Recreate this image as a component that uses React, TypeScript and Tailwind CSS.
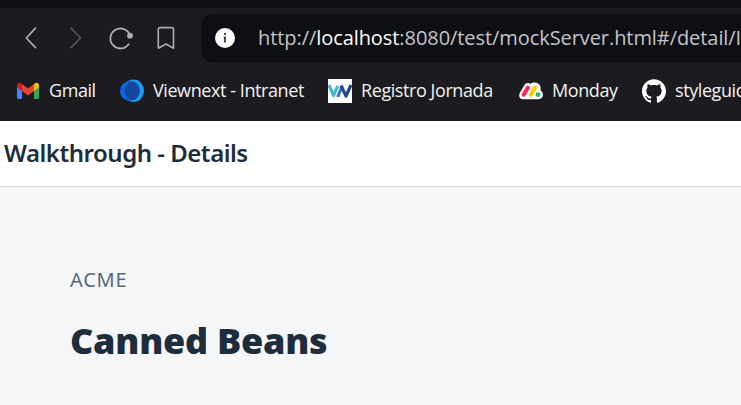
import { SiGithub } from "react-icons/si";

const BackIcon = () => (
  <svg className="block h-6 w-6" viewBox="0 0 24 24" fill="none" stroke="#aeaeb2" strokeWidth="1.7" strokeLinecap="round" strokeLinejoin="round">
    <path d="M16.5 2.200 7.300 12 16.500 21.700" />
  </svg>
);

const ForwardIcon = () => (
  <svg className="block h-6 w-6" viewBox="0 0 24 24" fill="none" stroke="#55555a" strokeWidth="1.7" strokeLinecap="round" strokeLinejoin="round">
    <path d="M7 2.200 16.500 12 7 21.700" />
  </svg>
);

const ReloadIcon = () => (
  <svg className="block h-6 w-6" viewBox="0 0 24 24" fill="none">
    <path d="M19.600 18.200A10 10 0 1 1 20.600 8.600" stroke="#aeaeb2" strokeWidth="1.8" strokeLinecap="round" />
    <circle cx="21" cy="9.700" r="2.900" fill="#aeaeb2" />
  </svg>
);

const BookmarkIcon = () => (
  <svg className="block h-6 w-6" viewBox="0 0 24 24" fill="none" stroke="#aeaeb2" strokeWidth="1.6" strokeLinejoin="round">
    <path d="M4.300 22.200V3.400Q4.300 1.600 6.100 1.600H17.700Q19.500 1.600 19.500 3.400V22.200L12 18Z" />
  </svg>
);

const InfoIcon = () => (
  <svg className="block h-5 w-5" viewBox="0 0 20 20">
    <circle cx="10" cy="10" r="10" fill="#fff" />
    <path d="M9 5h2v2H9zM8.600 8.600H11v6H9v-4.800h-.4z" fill="#45464a" />
  </svg>
);

const GmailIcon = () => (
  <svg className="block h-6 w-6" viewBox="0 0 24 24">
    <path d="M1 7.500V18.500Q1 20 2.600 20H6V10.600Z" fill="#4285f4" />
    <path d="M18 10.600V20h3.400Q23 20 23 18.500V7.500Z" fill="#34a853" />
    <path d="M18 6v6l5-3.800V6.300C23 3.700 20.200 3.100 18.500 4.500Z" fill="#fbbc04" />
    <path d="M6 6v6L1 8.200V6.300C1 3.700 3.800 3.100 5.500 4.500Z" fill="#c5221f" />
    <path d="M6 5v7l6 4.400 6-4.400V5l-6 4.500Z" fill="#ea4335" />
  </svg>
);

const ViewnextIcon = () => (
  <svg className="block h-6 w-6" viewBox="0 0 24 24">
    <ellipse cx="13.500" cy="11.800" rx="10.500" ry="11.200" fill="#189bea" />
    <ellipse cx="9.800" cy="12" rx="9.800" ry="9.900" fill="#0868dd" />
    <ellipse cx="12.300" cy="11.800" rx="7.500" ry="9.300" fill="#16479f" />
  </svg>
);

const RegistroIcon = () => (
  <svg className="block h-6 w-6" viewBox="0 0 24 24" fill="none" strokeWidth="3.200" strokeLinejoin="round">
    <path d="M0 0h24v24H0z" fill="#fff" />
    <path d="M1 6 5.500 16.500 9.800 7" stroke="#45b9d0" />
    <path d="M9.700 18 14 7.500" stroke="#3e79b8" />
    <path d="M13 6.500 18 17 23 6" stroke="#27458e" />
  </svg>
);

const MondayIcon = () => (
  <svg className="block h-6 w-6" viewBox="0 0 24 24" fill="none" strokeLinecap="round">
    <path d="M4.200 20.300C.6 20.300-.8 16.800.8 14L5.300 6.300C7 3.500 9.800 3.500 11.500 5.100 14 2.800 18.200 3.200 20.500 5.800 22 7.500 21.600 9.500 21.500 11.500 25 13.200 25 20.300 19.500 20.300Z" fill="#fff" />
    <path d="M4.700 15.800 8.800 8.700" stroke="#fb275d" strokeWidth="4.200" />
    <path d="m11.900 15.800 4.100-7.100" stroke="#ffcc00" strokeWidth="4.200" />
    <circle cx="18.900" cy="15.600" r="2.400" fill="#00ca72" />
  </svg>
);

const bookmarks = [
  { label: "Gmail", icon: <GmailIcon />, width: "w-[104px]" },
  { label: "Viewnext - Intranet", icon: <ViewnextIcon />, width: "w-[208px]" },
  { label: "Registro Jornada", icon: <RegistroIcon />, width: "w-[191px]" },
  { label: "Monday", icon: <MondayIcon />, width: "w-[123px]" },
  { label: "styleguid", icon: <SiGithub size={24} color="#fff" />, width: "w-[140px]" },
];

export default function App() {
  return (
    <div className="flex h-[405px] w-[741px] flex-col overflow-hidden bg-[#f5f6f8]">
      <div className="h-2 shrink-0 bg-[#0e0f14]" />
      <div className="flex h-[60px] shrink-0 items-center bg-[#1c1b1f] pl-[19px]">
        <nav className="flex w-[182px] shrink-0 gap-[21px]">
          <BackIcon />
          <ForwardIcon />
          <ReloadIcon />
          <BookmarkIcon />
        </nav>
        <div className="flex h-12 w-[560px] shrink-0 items-center gap-[23px] rounded-l-[11px] bg-[#0e0f14] pl-3.5">
          <InfoIcon />
          <div className="font-['Open_Sans',sans-serif] text-[20px] leading-6 tracking-[-0.07px] whitespace-nowrap text-[#c4c4c7]">
            http://<span className="text-white">localhost</span>:8080/test/mockServer.html#/detail/I
          </div>
        </div>
      </div>
      <div className="flex h-[53px] shrink-0 bg-[#1c1b1f] pt-[11px] pl-4">
        {bookmarks.map((b) => (
          <div key={b.label} className={`flex h-6 shrink-0 items-center gap-[9px] ${b.width}`}>
            {b.icon}
            <span className="-mt-0.5 font-['Open_Sans',sans-serif] text-[18px] leading-6 tracking-[-0.42px] whitespace-nowrap text-[#f2f2f3]">{b.label}</span>
          </div>
        ))}
      </div>
      <header className="flex h-[66px] shrink-0 items-center border-b border-[#d5d7d9] bg-white pb-0.5 pl-1">
        <h1 className="font-['Noto_Sans',sans-serif] text-[24px] leading-8 font-semibold tracking-[-0.48px] whitespace-nowrap text-[#1d2d3e]">Walkthrough - Details</h1>
      </header>
      <main className="px-[70px] pt-[81px] text-[#1d2d3e]">
        <p className="font-['Noto_Sans',sans-serif] text-[20px] leading-6 tracking-[0.8px] text-[#556b82]">ACME</p>
        <h2 className="mt-[29px] font-['Noto_Sans',sans-serif] text-[36px] leading-10 font-black tracking-[-0.25px] whitespace-nowrap">Canned Beans</h2>
      </main>
    </div>
  );
}
